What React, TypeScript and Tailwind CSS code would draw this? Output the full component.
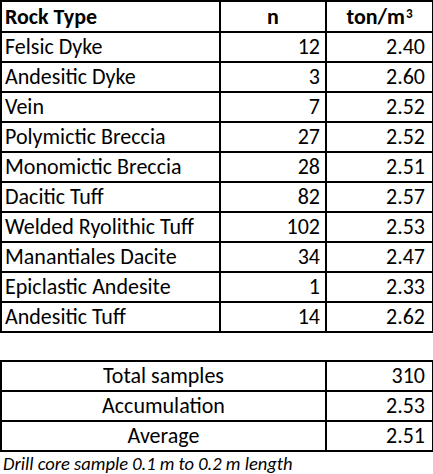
import React from 'react';

// Densidad por tipo de roca
interface RockRow {
  name: string;
  n: number;
  density: string;
}

const rows: RockRow[] = [
  { name: 'Felsic Dyke', n: 12, density: '2.40' },
  { name: 'Andesitic Dyke', n: 3, density: '2.60' },
  { name: 'Vein', n: 7, density: '2.52' },
  { name: 'Polymictic Breccia', n: 27, density: '2.52' },
  { name: 'Monomictic Breccia', n: 28, density: '2.51' },
  { name: 'Dacitic Tuff', n: 82, density: '2.57' },
  { name: 'Welded Ryolithic Tuff', n: 102, density: '2.53' },
  { name: 'Manantiales Dacite', n: 34, density: '2.47' },
  { name: 'Epiclastic Andesite', n: 1, density: '2.33' },
  { name: 'Andesitic Tuff', n: 14, density: '2.62' },
];

const summary = [
  { label: 'Total samples', value: '310' },
  { label: 'Accumulation', value: '2.53' },
  { label: 'Average', value: '2.51' },
];

const cell = 'border-2 border-black px-[3px] leading-none';

const App: React.FC = () => {
  return (
    <div
      className="w-[433px] h-[474px] bg-white text-black text-[22px] overflow-hidden"
      style={{ fontFamily: 'Carlito, Calibri, Lato, sans-serif' }}
    >
      <table className="border-collapse table-fixed w-[432px]">
        <colgroup>
          <col className="w-[219px]" />
          <col className="w-[106px]" />
          <col className="w-[107px]" />
        </colgroup>
        <thead>
          <tr className="h-[31px] font-bold">
            <td className={`${cell} text-left`}>Rock Type</td>
            <td className={`${cell} text-center`}>n</td>
            <td className={`${cell} text-center`}>
              ton/m<sup className="text-[13px] relative -top-[6px] ml-[1px] font-bold">3</sup>
            </td>
          </tr>
        </thead>
        <tbody>
          {rows.map((r) => (
            <tr key={r.name} className="h-[30px]">
              <td className={`${cell} text-left`}>{r.name}</td>
              <td className={`${cell} text-right pr-[5px]`}>{r.n}</td>
              <td className={`${cell} text-right pr-[7px]`}>{r.density}</td>
            </tr>
          ))}
        </tbody>
      </table>

      <table className="border-collapse table-fixed w-[432px] mt-[27px]">
        <colgroup>
          <col className="w-[325px]" />
          <col className="w-[107px]" />
        </colgroup>
        <tbody>
          {summary.map((s) => (
            <tr key={s.label} className="h-[30px]">
              <td className={`${cell} text-center`}>{s.label}</td>
              <td className={`${cell} text-right pr-[7px]`}>{s.value}</td>
            </tr>
          ))}
        </tbody>
      </table>

      <p className="italic text-[18.5px] leading-none pl-[3px] pt-[3px]">
        Drill core sample 0.1 m to 0.2 m length
      </p>
    </div>
  );
};

export default App;
